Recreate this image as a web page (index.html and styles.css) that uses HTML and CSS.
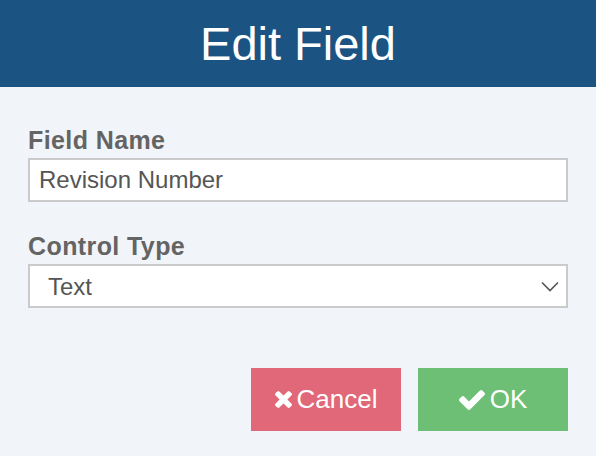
FILE: index.html
```html
<!DOCTYPE html>
<html>
<head>
<meta charset="utf-8">
<link rel="stylesheet" href="styles.css">
</head>
<body>
<div class="dialog">
  <header class="header"><h1 class="title">Edit Field</h1></header>
  <form class="body">
    <div class="group">
      <label class="label">Field Name</label>
      <input class="control" type="text" value="Revision Number">
    </div>
    <div class="group">
      <label class="label">Control Type</label>
      <div class="select-wrap">
        <select class="control select"><option>Text</option></select>
        <svg class="chevron" width="18" height="11" viewBox="0 0 18 11"><polyline points="1,1.5 9,9.5 17,1.5" fill="none" stroke="#555" stroke-width="1.6"/></svg>
      </div>
    </div>
    <div class="actions">
      <button type="button" class="btn btn-cancel">
        <svg class="icon" width="17" height="17" viewBox="110 366 1188 1188"><path fill="#fff" d="M1298 1322q0 40-28 68l-136 136q-28 28-68 28t-68-28l-294-294-294 294q-28 28-68 28t-68-28l-136-136q-28-28-28-68t28-68l294-294-294-294q-28-28-28-68t28-68l136-136q28-28 68-28t68 28l294 294 294-294q28-28 68-28t68 28l136 136q28 28 28 68t-28 68l-294 294 294 294q28 28 28 68z"/></svg>Cancel
      </button>
      <button type="button" class="btn btn-ok">
        <svg class="icon" width="26" height="20" viewBox="121 334 1550 1188"><path fill="#fff" d="M1671 566q0 40-28 68l-724 724-136 136q-28 28-68 28t-68-28l-136-136-362-362q-28-28-28-68t28-68l136-136q28-28 68-28t68 28l294 295 656-657q28-28 68-28t68 28l136 136q28 28 28 68z"/></svg>OK
      </button>
    </div>
  </form>
</div>
</body>
</html>
```
FILE: styles.css
```css
html, body {
  margin: 0;
  padding: 0;
  background: #f1f4f8;
  font-family: "Liberation Sans", Arial, Helvetica, sans-serif;
}
.dialog {
  width: 596px;
  height: 456px;
  display: flex;
  flex-direction: column;
}
.header {
  height: 87px;
  background: #1b5382;
  display: flex;
  align-items: center;
  justify-content: center;
}
.title {
  margin: 0;
  color: #fff;
  font-size: 47px;
  font-weight: normal;
  line-height: 87px;
}
.body {
  margin: 0;
  padding: 38px 28px 0 28px;
  display: flex;
  flex-direction: column;
}
.group {
  display: flex;
  flex-direction: column;
}
.group + .group {
  margin-top: 29px;
}
.label {
  display: block;
  font-size: 25px;
  font-weight: bold;
  line-height: 30px;
  letter-spacing: 0.4px;
  color: #646464;
  margin-bottom: 3px;
}
.control {
  box-sizing: border-box;
  width: 540px;
  height: 44px;
  margin: 0;
  border: 2px solid #cacaca;
  border-radius: 0;
  background: #fff;
  font-family: "Liberation Sans", Arial, Helvetica, sans-serif;
  font-size: 24px;
  color: #555;
  padding: 0 9px;
  outline: none;
}
.select-wrap {
  position: relative;
  width: 540px;
}
.select {
  appearance: none;
  -webkit-appearance: none;
  padding-left: 18px;
  display: block;
}
.chevron {
  position: absolute;
  right: 9px;
  top: 17px;
}
.actions {
  margin-top: 60px;
  display: flex;
  justify-content: flex-end;
  gap: 17px;
}
.btn {
  width: 150px;
  height: 63px;
  border: none;
  border-radius: 0;
  padding: 0;
  margin: 0;
  display: flex;
  align-items: center;
  justify-content: center;
  color: #fff;
  font-family: "Liberation Sans", Arial, Helvetica, sans-serif;
  font-size: 26px;
}
.btn-cancel {
  background: #e06878;
}
.btn-ok {
  background: #6cbf74;
}
.icon {
  margin-right: 5px;
}
```
